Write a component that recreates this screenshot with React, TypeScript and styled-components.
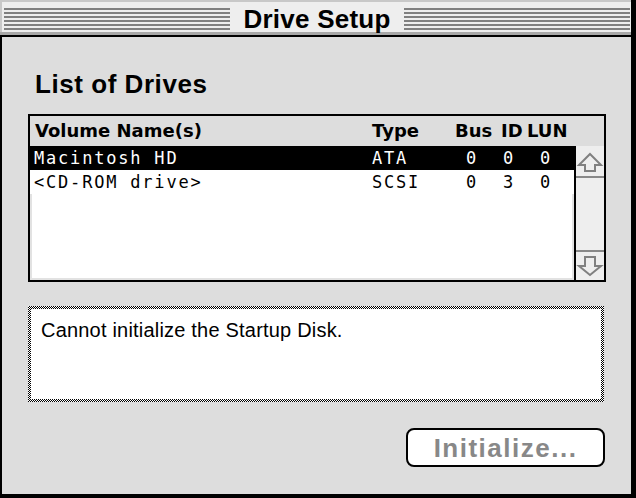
import styled, { createGlobalStyle } from 'styled-components';

const GlobalStyle = createGlobalStyle`
  html, body {
    margin: 0;
    padding: 0;
    background: #000;
  }
  * {
    box-sizing: border-box;
  }
`

const Frame = styled.div`
  width: 636px;
  height: 498px;
  display: flex;
  flex-direction: column;
  border-right: 5px solid #000;
  border-bottom: 4px solid #000;
  background: #000;
`

const TitleBar = styled.div`
  height: 37px;
  display: flex;
  align-items: flex-start;
  gap: 13px;
  padding: 0 1px 0 4px;
  background: #eeeeee;
  border-bottom: 2px solid #000;
  box-shadow: inset 0 -3px 0 #a8a8a8, inset 2px 2px 0 #c8c8c8;
`

const Stripes = styled.div`
  flex: 1;
  height: 22px;
  margin-top: 8px;
  background: repeating-linear-gradient(#808080 0 2px, transparent 2px 4px);
`

const Title = styled.div`
  margin-top: 4px;
  font-family: "Liberation Sans", Arial, sans-serif;
  font-weight: bold;
  font-size: 26px;
  line-height: 30px;
  letter-spacing: 0.25px;
  color: #000;
  white-space: nowrap;
`

const Body = styled.div`
  flex: 1;
  display: flex;
  flex-direction: column;
  background: #dddddd;
  border-left: 2px solid #000;
  padding: 32px 25px 0 26px;
`

const Heading = styled.h1`
  margin: 0;
  padding-left: 7px;
  font-family: "Liberation Sans", Arial, sans-serif;
  font-weight: bold;
  font-size: 26px;
  line-height: 30px;
  letter-spacing: 0.55px;
  color: #000;
`

const ListBox = styled.div`
  margin-top: 15px;
  width: 578px;
  height: 168px;
  border: 2px solid #000;
  display: flex;
  flex-direction: column;
`

const HeaderRow = styled.div`
  height: 30px;
  display: grid;
  grid-template-columns: 342px 83px 46px 26px 1fr;
  background: #dddddd;
  font-family: "DejaVu Sans", sans-serif;
  font-weight: bold;
  font-size: 18px;
  line-height: 30px;
  color: #000;
`

const HeaderCell = styled.div<{ $pad?: number }>`
  padding-left: ${props => props.$pad ?? 0}px;
  white-space: nowrap;
`

const ListArea = styled.div`
  flex: 1;
  display: flex;
  min-height: 0;
`

const Rows = styled.div`
  flex: 1;
  display: flex;
  flex-direction: column;
  background: #fff;
`

const Row = styled.div<{ $selected?: boolean }>`
  height: 24px;
  padding-top: 1px;
  display: grid;
  grid-template-columns: 342px 83px 46px 26px 1fr;
  background: ${props => props.$selected ? '#000' : '#fff'};
  color: ${props => props.$selected ? '#fff' : '#000'};
  font-family: "DejaVu Sans Mono", monospace;
  font-size: 17px;
  line-height: 23px;
  letter-spacing: 1.8px;
`

const Cell = styled.div<{ $pad?: number }>`
  padding-left: ${props => props.$pad ?? 0}px;
  white-space: pre;
`

const EmptyArea = styled.div`
  flex: 1;
  box-shadow: inset 2px 0 0 #e2e2e2, inset -2px 0 0 #e2e2e2, inset 0 -2px 0 #e2e2e2;
`

const ScrollBar = styled.div`
  width: 30px;
  display: flex;
  flex-direction: column;
  background: #eeeeee;
  border-left: 2px solid #000;
`

const ArrowBox = styled.div<{ $h: number; $up?: boolean }>`
  height: ${props => props.$h}px;
  ${props => props.$up ? 'border-bottom' : 'border-top'}: 2px solid #888;
  display: flex;
  justify-content: center;
`

const Track = styled.div`
  flex: 1;
`

const MessageBox = styled.div`
  margin-top: 24px;
  width: 576px;
  height: 96px;
  padding: 3px;
  background: repeating-conic-gradient(#000 0 25%, #fff 0 50%) 0 0 / 2px 2px;
`

const MessageInner = styled.div`
  height: 100%;
  background: #fff;
  padding: 9px 0 0 10px;
  font-family: "Liberation Sans", Arial, sans-serif;
  font-size: 20px;
  line-height: 24px;
  letter-spacing: 0.2px;
  color: #000;
`

const ButtonRow = styled.div`
  margin-top: 26px;
  display: flex;
  justify-content: flex-end;
  padding-right: 1px;
`

const Button = styled.button`
  width: 199px;
  height: 39px;
  padding: 0;
  background: #fff;
  border: 2px solid #000;
  border-radius: 8px;
  font-family: "Liberation Sans", Arial, sans-serif;
  font-weight: bold;
  font-size: 26px;
  line-height: 30px;
  letter-spacing: 1.5px;
  color: #888;
`

function UpArrow() {
  return (
    <svg width="28" height="30" viewBox="0 0 28 30">
      <polygon points="14,8 25,19 19,19 19,25 9,25 9,19 3,19" fill="none" stroke="#808080" strokeWidth="2" />
    </svg>
  )
}

function DownArrow() {
  return (
    <svg width="28" height="28" viewBox="0 0 28 28">
      <polygon points="9,5 19,5 19,14 25,14 14,23 3,14 9,14" fill="none" stroke="#808080" strokeWidth="2" />
    </svg>
  )
}

interface Drive {
  name: string,
  type: string,
  bus: number,
  id: number,
  lun: number
}

const drives: Drive[] = [
  { name: 'Macintosh HD', type: 'ATA', bus: 0, id: 0, lun: 0 },
  { name: '<CD-ROM drive>', type: 'SCSI', bus: 0, id: 3, lun: 0 },
]

export default function App() {
  return (
    <>
      <GlobalStyle />
      <Frame>
        <TitleBar>
          <Stripes />
          <Title>Drive Setup</Title>
          <Stripes />
        </TitleBar>
        <Body>
          <Heading>List of Drives</Heading>
          <ListBox>
            <HeaderRow>
              <HeaderCell $pad={5}>Volume Name(s)</HeaderCell>
              <HeaderCell>Type</HeaderCell>
              <HeaderCell>Bus</HeaderCell>
              <HeaderCell>ID</HeaderCell>
              <HeaderCell>LUN</HeaderCell>
            </HeaderRow>
            <ListArea>
              <Rows>
                {drives.map((drive, i) => (
                  <Row key={drive.name} $selected={i === 0}>
                    <Cell $pad={4}>{drive.name}</Cell>
                    <Cell>{drive.type}</Cell>
                    <Cell $pad={11}>{drive.bus}</Cell>
                    <Cell $pad={2}>{drive.id}</Cell>
                    <Cell $pad={13}>{drive.lun}</Cell>
                  </Row>
                ))}
                <EmptyArea />
              </Rows>
              <ScrollBar>
                <ArrowBox $h={32} $up>
                  <UpArrow />
                </ArrowBox>
                <Track />
                <ArrowBox $h={30}>
                  <DownArrow />
                </ArrowBox>
              </ScrollBar>
            </ListArea>
          </ListBox>
          <MessageBox>
            <MessageInner>Cannot initialize the Startup Disk.</MessageInner>
          </MessageBox>
          <ButtonRow>
            <Button disabled>Initialize...</Button>
          </ButtonRow>
        </Body>
      </Frame>
    </>
  )
}
